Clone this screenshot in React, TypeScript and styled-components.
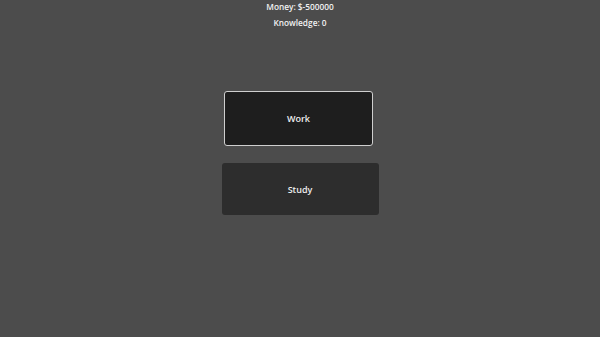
import React from "react";
import styled, { createGlobalStyle } from "styled-components";

const Global = createGlobalStyle`
  html, body { margin: 0; padding: 0; background: #4c4c4c; }
  body { font-family: "Open Sans", "Noto Sans", sans-serif; }
`;

const Screen = styled.div`
  width: 600px;
  height: 337px;
  background: #4c4c4c;
  display: flex;
  flex-direction: column;
  align-items: center;
  overflow: hidden;
`;

const Stats = styled.div`
  display: flex;
  flex-direction: column;
  align-items: center;
  gap: 4px;
  padding-top: 1px;
`;

const Stat = styled.div`
  color: #f2f2f2;
  font-size: 8.3px;
  font-weight: 600;
  line-height: 12px;
`;

const Buttons = styled.div`
  display: flex;
  flex-direction: column;
  align-items: center;
  gap: 17px;
  margin-top: 62px;
`;

const Button = styled.button<{ $focused?: boolean }>`
  box-sizing: border-box;
  width: ${(p) => (p.$focused ? "149px" : "157px")};
  height: ${(p) => (p.$focused ? "55px" : "52px")};
  margin-right: ${(p) => (p.$focused ? "3px" : "0")};
  background: ${(p) => (p.$focused ? "#1e1e1e" : "#2d2d2d")};
  border: ${(p) => (p.$focused ? "1px solid #cfcfcf" : "none")};
  border-radius: 3px;
  color: #eeeeee;
  font-family: "Open Sans", "Noto Sans", sans-serif;
  font-size: 9px;
  font-weight: 600;
  display: flex;
  align-items: center;
  justify-content: center;
  padding: 0;
  cursor: pointer;
`;

export default function App() {
  return (
    <>
      <Global />
      <Screen>
        <Stats>
          <Stat>Money: $-500000</Stat>
          <Stat>Knowledge: 0</Stat>
        </Stats>
        <Buttons>
          <Button $focused>Work</Button>
          <Button>Study</Button>
        </Buttons>
      </Screen>
    </>
  );
}
